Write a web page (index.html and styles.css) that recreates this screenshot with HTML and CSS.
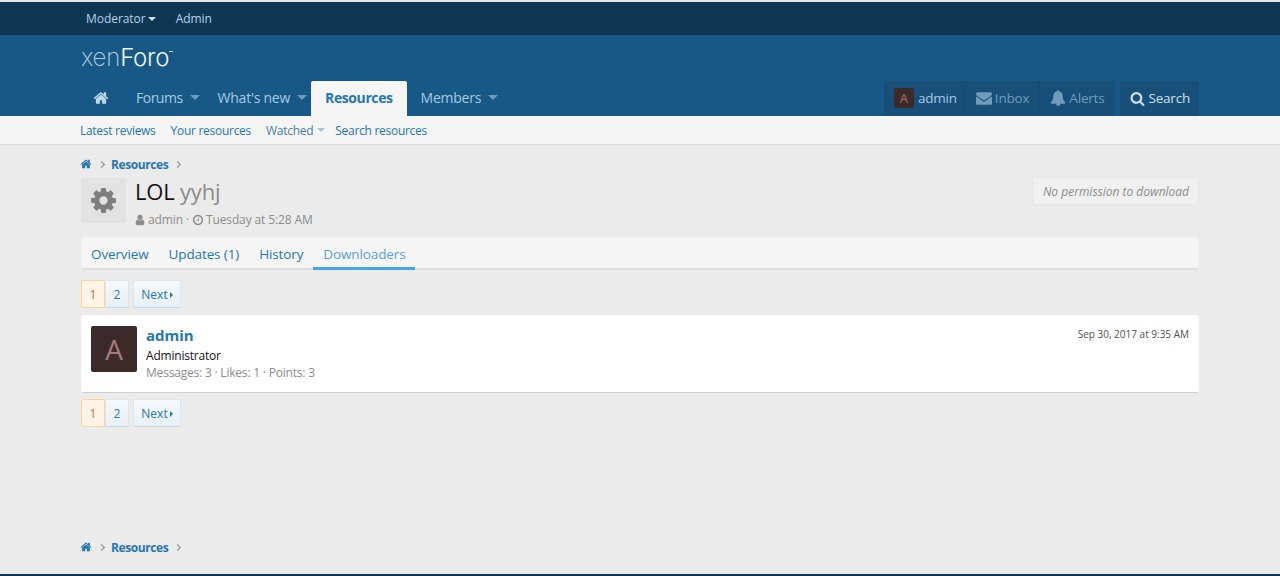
FILE: index.html
```html
<!DOCTYPE html>
<html lang="en">
<head>
<meta charset="utf-8">
<title>LOL yyhj | Downloaders</title>
<link rel="stylesheet" href="styles.css">
</head>
<body>
<svg class="sprite" aria-hidden="true">
  <symbol id="i-home" viewBox="0 0 1792 1792"><path d="M1472 992v480q0 26-19 45t-45 19h-384v-384h-256v384h-384q-26 0-45-19t-19-45v-480q0-1 .5-3t.5-3l575-474 575 474q1 2 1 6zm223-69l-62 74q-8 9-21 11h-3q-13 0-21-7l-692-577-692 577q-12 8-24 7-13-2-21-11l-62-74q-8-10-7-23.5t11-21.5l719-599q32-26 76-26t76 26l244 204v-195q0-14 9-23t23-9h192q14 0 23 9t9 23v408l219 182q10 8 11 21.5t-7 23.5z"/></symbol>
  <symbol id="i-mail" viewBox="0 0 1792 1792"><path d="M1792 710v794q0 66-47 113t-113 47h-1472q-66 0-113-47t-47-113v-794q44 49 101 87 362 246 497 345 57 42 92.5 65.5t94.5 48 110 24.5h2q51 0 110-24.5t94.5-48 92.5-65.5q170-123 498-345 57-39 100-87zm0-294q0 79-49 151t-122 123q-376 261-468 325-10 7-42.5 30.5t-54 38-52 32.5-57.5 27-50 9h-2q-23 0-50-9t-57.5-27-52-32.5-54-38-42.5-30.5q-91-64-262-182.5t-205-142.5q-62-42-117-115.5t-55-136.5q0-78 41.5-130t118.5-52h1472q65 0 112.5 47t47.5 113z"/></symbol>
  <symbol id="i-bell" viewBox="0 0 1792 1792"><path d="M912 1696q0-16-16-16-59 0-101.5-42.5t-42.5-101.5q0-16-16-16t-16 16q0 73 51.5 124.5t124.5 51.5q16 0 16-16zm816-288q0 52-38 90t-90 38h-448q0 106-75 181t-181 75-181-75-75-181h-448q-52 0-90-38t-38-90q50-42 91-88t85-119.5 74.5-158.5 50-206 19.5-260q0-152 117-282.5t307-158.5q-8-19-8-39 0-40 28-68t68-28 68 28 28 68q0 20-8 39 190 28 307 158.5t117 282.5q0 139 19.5 260t50 206 74.5 158.5 85 119.5 91 88z"/></symbol>
  <symbol id="i-search" viewBox="0 0 1792 1792"><path d="M1216 832q0-185-131.5-316.5t-316.5-131.5-316.5 131.5-131.5 316.5 131.5 316.5 316.5 131.5 316.5-131.5 131.5-316.5zm512 832q0 52-38 90t-90 38q-54 0-90-38l-343-342q-179 124-399 124-143 0-273.5-55.5t-225-150-150-225-55.5-273.5 55.5-273.5 150-225 225-150 273.5-55.5 273.5 55.5 225 150 150 225 55.5 273.5q0 220-124 399l343 343q37 37 37 90z"/></symbol>
  <symbol id="i-cog" viewBox="0 0 1792 1792"><path d="M1152 896q0-106-75-181t-181-75-181 75-75 181 75 181 181 75 181-75 75-181zm512-109v222q0 12-8 23t-20 13l-185 28q-19 54-39 91 35 50 107 138 10 12 10 25t-9 23q-27 37-99 108t-94 71q-12 0-26-9l-138-108q-44 23-91 38-16 136-29 186-7 28-36 28h-222q-14 0-24.5-8.5t-11.5-21.5l-28-184q-49-16-90-37l-141 107q-10 9-25 9-14 0-25-11-126-114-165-168-7-10-7-23 0-12 8-23 15-21 51-66.5t54-70.5q-27-50-41-99l-183-27q-13-2-21-12.5t-8-23.5v-222q0-12 8-23t19-13l186-28q14-46 39-92-40-57-107-138-10-12-10-24 0-10 9-23 26-36 98.5-107.5t94.5-71.5q13 0 26 10l138 107q44-23 91-38 16-136 29-186 7-28 36-28h222q14 0 24.5 8.5t11.5 21.5l28 184q49 16 90 37l142-107q9-9 24-9 13 0 25 10 129 119 165 170 7 8 7 22 0 12-8 23-15 21-51 66.5t-54 70.5q26 50 41 98l183 28q13 2 21 12.5t8 23.5z"/></symbol>
  <symbol id="i-user" viewBox="0 0 1792 1792"><path d="M1536 1399q0 109-62.5 187t-150.5 78h-854q-88 0-150.5-78t-62.5-187q0-85 8.5-160.5t31.5-152 58.5-131 94-89 134.5-34.5q131 128 313 128t313-128q76 0 134.5 34.5t94 89 58.5 131 31.5 152 8.5 160.5zm-256-887q0 159-112.5 271.5t-271.5 112.5-271.5-112.5-112.5-271.5 112.5-271.5 271.5-112.5 271.5 112.5 112.5 271.5z"/></symbol>
  <symbol id="i-clock" viewBox="0 0 1792 1792"><path d="M1024 544v448q0 14-9 23t-23 9h-320q-14 0-23-9t-9-23v-64q0-14 9-23t23-9h224v-352q0-14 9-23t23-9h64q14 0 23 9t9 23zm416 352q0-148-73-273t-198-198-273-73-273 73-198 198-73 273 73 273 198 198 273 73 273-73 198-198 73-273zm224 0q0 209-103 385.5t-279.5 279.5-385.5 103-385.5-103-279.5-279.5-103-385.5 103-385.5 279.5-279.5 385.5-103 385.5 103 279.5 279.5 103 385.5z"/></symbol>
</svg>

<div class="staffbar">
  <div class="wrap staffbar-in">
    <a class="staff-link">Moderator <span class="caret caret-staff"></span></a>
    <a class="staff-link">Admin</a>
  </div>
</div>

<header class="header">
  <div class="wrap">
    <div class="logo"><span class="logo-xen">xen</span><span class="logo-foro">Foro</span><span class="logo-tm"></span></div>
    <nav class="nav">
      <div class="nav-left">
        <a class="nav-home"><svg class="icon icon-home"><use href="#i-home"/></svg></a>
        <a class="nav-item nav-drop nav-forums">Forums<span class="caret caret-nav"></span></a>
        <a class="nav-item nav-drop">What's new<span class="caret caret-nav"></span></a>
        <a class="nav-item nav-active">Resources</a>
        <a class="nav-item nav-drop">Members<span class="caret caret-nav"></span></a>
      </div>
      <div class="nav-right">
        <div class="nav-group">
          <a class="user-item user-me"><span class="avatar-sm">A</span>admin</a>
          <a class="user-item user-dim"><svg class="icon icon-mail"><use href="#i-mail"/></svg>Inbox</a>
          <a class="user-item user-dim"><svg class="icon icon-bell"><use href="#i-bell"/></svg>Alerts</a>
        </div>
        <div class="nav-group">
          <a class="user-item user-search"><svg class="icon icon-search"><use href="#i-search"/></svg>Search</a>
        </div>
      </div>
    </nav>
  </div>
</header>

<div class="subnav">
  <div class="wrap subnav-in">
    <a class="sub-link">Latest reviews</a>
    <a class="sub-link">Your resources</a>
    <a class="sub-link sub-watched">Watched<span class="caret caret-sub"></span></a>
    <a class="sub-link">Search resources</a>
  </div>
</div>

<main class="wrap main">
  <div class="crumbs">
    <svg class="icon icon-crumb"><use href="#i-home"/></svg>
    <span class="sep"></span>
    <a class="crumb">Resources</a>
    <span class="sep"></span>
  </div>

  <section class="title-row">
    <div class="res-icon"><svg class="icon icon-cog"><use href="#i-cog"/></svg></div>
    <div class="title-body">
      <h1 class="title">LOL <span class="title-ver">yyhj</span></h1>
      <p class="title-meta"><svg class="icon icon-meta"><use href="#i-user"/></svg>admin · <svg class="icon icon-meta"><use href="#i-clock"/></svg>Tuesday at 5:28 AM</p>
    </div>
    <div class="no-perm">No permission to download</div>
  </section>

  <div class="tabs">
    <a class="tab">Overview</a>
    <a class="tab">Updates (1)</a>
    <a class="tab">History</a>
    <a class="tab tab-active">Downloaders</a>
  </div>

  <div class="pager">
    <a class="page page-cur">1</a><a class="page">2</a><a class="page page-next">Next<span class="caret-right"></span></a>
  </div>

  <article class="card">
    <div class="avatar-lg">A</div>
    <div class="card-body">
      <a class="card-name">admin</a>
      <div class="card-role">Administrator</div>
      <div class="card-stats">Messages: 3 · Likes: 1 · Points: 3</div>
    </div>
    <time class="card-date">Sep 30, 2017 at 9:35 AM</time>
  </article>

  <div class="pager">
    <a class="page page-cur">1</a><a class="page">2</a><a class="page page-next">Next<span class="caret-right"></span></a>
  </div>

  <div class="crumbs crumbs-bottom">
    <svg class="icon icon-crumb"><use href="#i-home"/></svg>
    <span class="sep"></span>
    <a class="crumb">Resources</a>
    <span class="sep"></span>
  </div>
</main>

<footer class="footer"></footer>
</body>
</html>
```
FILE: styles.css
```css
* { box-sizing: border-box; }
html, body { height: 100%; }
body {
  margin: 0;
  height: 576px;
  overflow: hidden;
  display: flex;
  flex-direction: column;
  background: #ebebeb;
  color: #141414;
  font-family: "Open Sans", "Noto Sans", sans-serif;
  font-size: 13px;
}
a { color: inherit; text-decoration: none; }
.sprite { display: none; }
.icon { fill: currentColor; display: inline-block; flex: none; }
.wrap { margin: 0 81px; }

.caret { display: inline-block; width: 0; height: 0; border-style: solid; border-color: currentColor transparent transparent; }

.staffbar { height: 35px; flex: none; background: #0f3652; border-top: 2px solid #e4e8eb; color: #b4d3ea; }
.staffbar-in { display: flex; height: 33px; align-items: center; gap: 20px; padding-left: 5px; font-size: 12px; letter-spacing: -0.05px; }
.caret-staff { border-width: 4px 4px 0; color: #cfe2f0; margin-left: -1px; vertical-align: 2px; }

.header { height: 81px; flex: none; background: #185886; }
.logo { height: 46px; padding-top: 8px; font-family: "Inter", "Roboto", sans-serif; font-size: 24px; line-height: 30px; font-weight: 200; letter-spacing: -0.2px; }
.logo-xen { color: #b5cfe3; }
.logo-foro { color: #f2f6f9; font-weight: 300; }
.logo-tm { display: inline-block; width: 4px; height: 1px; background: #d0dfeb; vertical-align: 14px; }

.nav { display: flex; justify-content: space-between; height: 35px; margin-left: -1px; }
.nav-left { display: flex; }
.nav-home { display: flex; align-items: center; padding: 0 13px 1px; color: #bcd8ec; }
.icon-home { width: 16px; height: 16px; }
.nav-item { display: flex; align-items: center; padding: 0 14px 2px; color: #a5cae4; font-size: 14px; letter-spacing: -0.25px; }
.nav-forums { letter-spacing: -0.5px; }
.nav-drop { padding-right: 4px; }
.caret-nav { border-width: 5px 5px 0; color: #6f9cbd; margin-left: 7px; }
.nav-active { background: #f5f5f5; color: #2577b1; font-weight: 700; border-radius: 2px 2px 0 0; letter-spacing: -0.4px; }
.nav-right { display: flex; gap: 6px; }
.nav-group { display: flex; background: #174f78; border-radius: 2px 2px 0 0; }
.user-item { display: flex; align-items: center; padding: 0 10px 1px; color: #a5cae4; font-size: 13.5px; letter-spacing: -0.2px; border-left: 1px solid #164a71; }
.user-item:first-child { border-left: 0; }
.user-me { padding-right: 8px; }
.user-dim { color: #6f9cbd; }
.user-search { color: #cde0ee; padding: 0 9px 1px 10px; }
.avatar-sm { width: 20px; height: 20px; margin-right: 4px; background: #3c2a2a; color: #a3706c; border-radius: 2px; font-size: 13px; line-height: 20px; text-align: center; letter-spacing: 0; }
.icon-mail { width: 16px; height: 16px; margin-right: 3px; }
.icon-bell { width: 16px; height: 16px; margin-right: 3px; }
.icon-search { width: 15px; height: 15px; margin-right: 3px; }

.subnav { height: 29px; flex: none; background: #f5f5f5; border-bottom: 1px solid #dfdfdf; }
.subnav-in { display: flex; height: 28px; align-items: center; font-size: 12px; letter-spacing: -0.28px; color: #2577b1; margin-left: 80px; gap: 15px; }
.sub-watched { display: flex; align-items: center; color: #4f7fa5; margin-right: -5px; }
.caret-sub { border-width: 4px 4px 0; color: #a5c3da; margin-left: 4px; }

.main { flex: 1; display: flex; flex-direction: column; min-height: 0; }
.crumbs { display: flex; align-items: center; height: 16px; margin-top: 11px; font-size: 12px; color: #2577b1; }
.crumb { font-weight: 700; letter-spacing: -0.4px; }
.icon-crumb { width: 12px; height: 12px; margin-left: -1px; }
.sep { width: 5px; height: 5px; border-top: 1px solid #8c8c8c; border-right: 1px solid #8c8c8c; transform: rotate(45deg); margin: 0 7px; }
.crumbs-bottom { margin-top: auto; margin-bottom: 19px; }

.title-row { display: flex; height: 45px; margin-top: 6px; }
.res-icon { width: 45px; height: 45px; background: #e2e2e2; border-radius: 2px; display: flex; align-items: center; justify-content: center; color: #7f7f7f; flex: none; }
.icon-cog { width: 29px; height: 29px; }
.title-body { flex: 1; padding-left: 9px; }
.title { margin: 0; font-size: 22px; line-height: 26px; font-weight: 400; color: #141414; letter-spacing: -0.2px; }
.title-ver { color: #8c8c8c; }
.title-meta { margin: 7px 0 0 -1px; font-size: 12px; line-height: 18px; letter-spacing: -0.12px; color: #8c8c8c; display: flex; align-items: center; white-space: pre; }
.icon-meta { width: 12px; height: 12px; margin-right: 2px; }
.icon-meta + .icon-meta { margin-left: 0; }
.no-perm { width: 167px; height: 28px; margin-top: -1px; padding-left: 1px; background: #f0f0f0; border: 1px solid #e6e6e6; border-radius: 3px; font-size: 12px; font-style: italic; color: #8c8c8c; line-height: 28px; text-align: center; white-space: nowrap; flex: none; }

.tabs { display: flex; height: 33px; margin-top: 14px; background: #f5f5f5; border: 1px solid #eeeeee; border-bottom: 2px solid #dfdfdf; border-radius: 2px; }
.tab { padding: 0 10px; font-size: 13.5px; letter-spacing: -0.12px; line-height: 33px; color: #2577b1; height: 32px; }
.tab:first-child { margin-left: -1px; }
.tab-active { color: #56a4dd; border-bottom: 3px solid #44a5ee; }

.pager { display: flex; height: 28px; margin-top: 10px; font-size: 12px; color: #2577b1; flex: none; }
.page { width: 24px; background: linear-gradient(#f5f9fc, #e6f0f8); border: 1px solid #dfe5ea; border-bottom-color: #cfd6dc; line-height: 28px; text-align: center; }
.page-cur { background: #fff4e5; color: #c66b2a; border-color: #fbd69b; border-radius: 2px 0 0 2px; }
.page-next { width: 48px; margin-left: 4px; border-radius: 2px; }
.caret-right { display: inline-block; width: 0; height: 0; margin-left: 2px; vertical-align: 1px; border-style: solid; border-width: 3px 0 3px 3px; border-color: transparent transparent transparent #2577b1; }

.card { display: flex; height: 78px; margin-top: 7px; background: #fff; border: 1px solid #fff; border-bottom-color: #d0d0d0; border-radius: 3px; padding: 10px 9px 0 9px; }
.card + .pager { margin-top: 6px; }
.avatar-lg { width: 46px; height: 46px; background: #3c2a2a; color: #a37b7b; border-radius: 2px; font-size: 28px; line-height: 46px; text-align: center; flex: none; }
.card-body { flex: 1; padding-left: 9px; }
.card-name { display: block; font-size: 15px; font-weight: 700; color: #2577b1; line-height: 18px; }
.card-role { font-size: 12px; line-height: 17px; margin-top: 3px; letter-spacing: -0.2px; }
.card-stats { font-size: 12px; line-height: 17px; color: #8c8c8c; letter-spacing: -0.2px; }
.card-date { font-size: 10px; line-height: 14px; color: #505050; margin-top: 1px; white-space: nowrap; }

.footer { height: 2px; flex: none; background: #0f3652; }
```
